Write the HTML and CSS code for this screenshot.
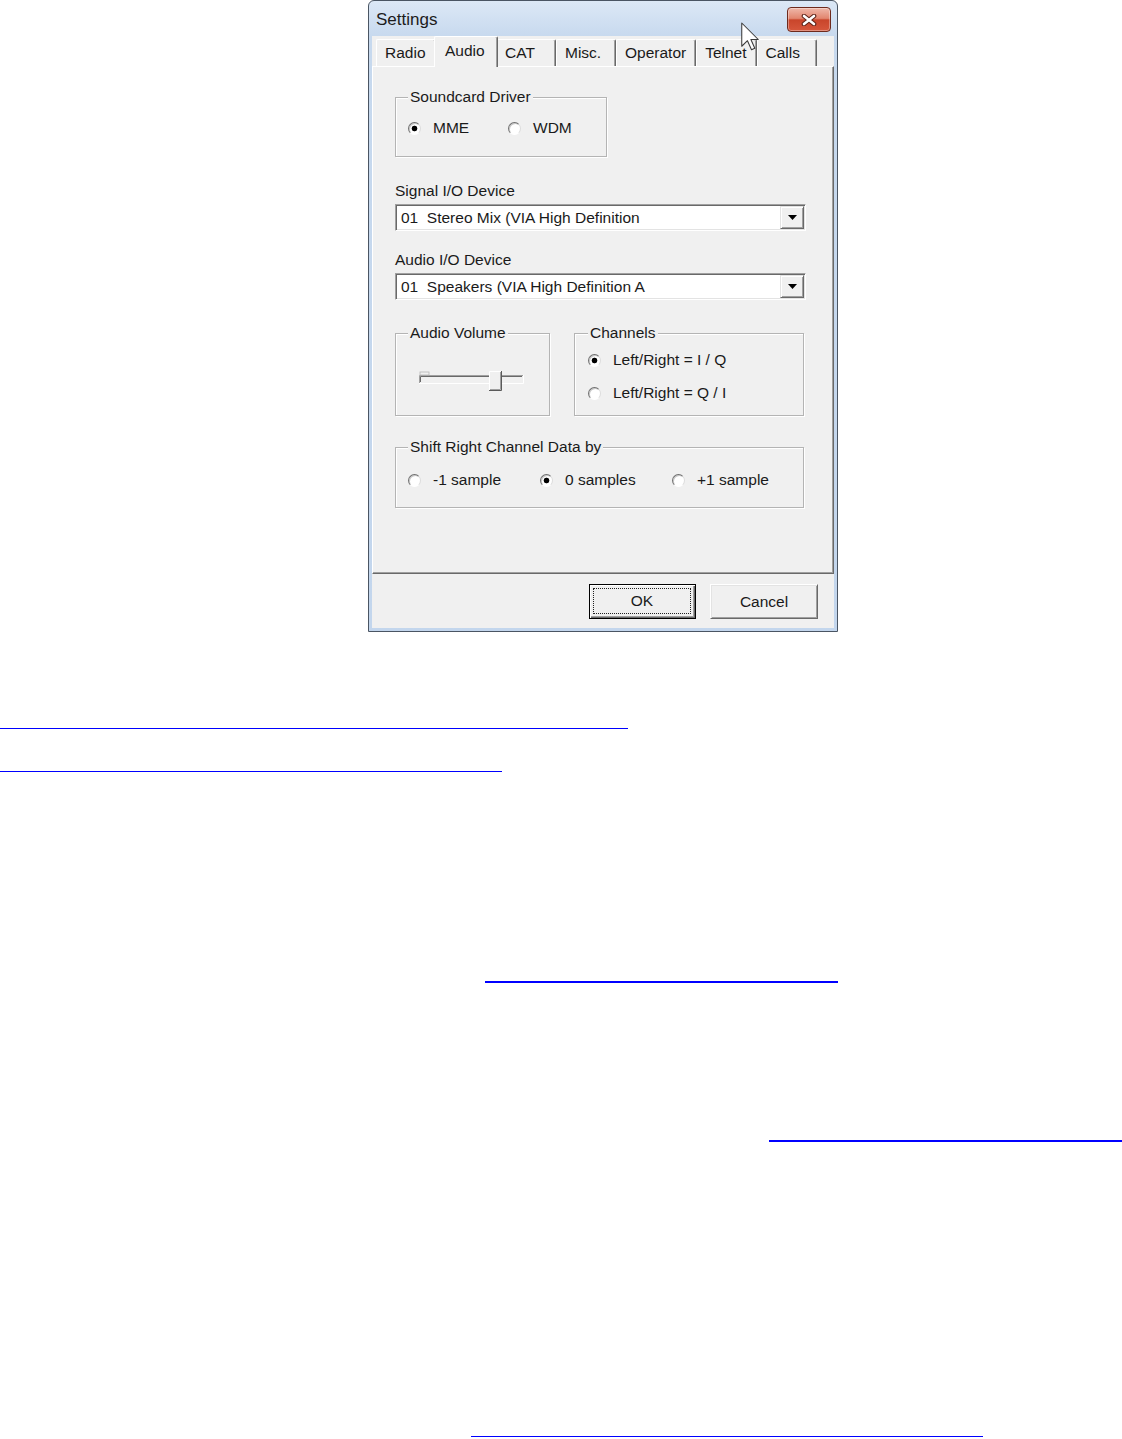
FILE: index.html
```html
<!DOCTYPE html>
<html lang="en">
<head>
    <meta charset="UTF-8">
    <title>Settings</title>
    <link rel="stylesheet" href="styles.css">
</head>
<body>
    <div class="window">
        <div class="titlebar">
            <span class="title">Settings</span>
            <button class="close" aria-label="Close">
                <svg width="16" height="12" viewBox="0 0 16 12">
                    <path d="M3 2 L13 10 M13 2 L3 10" stroke="#5b2116" stroke-width="4.6" stroke-linecap="round"/>
                    <path d="M3 2 L13 10 M13 2 L3 10" stroke="#ffffff" stroke-width="2.6" stroke-linecap="round"/>
                </svg>
            </button>
        </div>

        <div class="client">
            <div class="tabs">
                <span class="tab">Radio</span>
                <span class="tab tab-active">Audio</span>
                <span class="tab">CAT</span>
                <span class="tab">Misc.</span>
                <span class="tab">Operator</span>
                <span class="tab">Telnet</span>
                <span class="tab">Calls</span>
            </div>

            <div class="page">
                <div class="group group-driver">
                    <span class="group-title">Soundcard Driver</span>
                    <div class="radio-row">
                        <label class="radio-item radio-item-driver"><span class="radio checked"></span>MME</label>
                        <label class="radio-item radio-item-driver"><span class="radio"></span>WDM</label>
                    </div>
                </div>

                <div class="field-label">Signal I/O Device</div>
                <div class="combo">
                    <span class="combo-text">01  Stereo Mix (VIA High Definition</span>
                    <span class="combo-btn">
                        <svg width="9" height="5" viewBox="0 0 9 5"><polygon points="0,0 9,0 4.5,5" fill="#000"/></svg>
                    </span>
                </div>

                <div class="field-label field-label-2">Audio I/O Device</div>
                <div class="combo">
                    <span class="combo-text">01  Speakers (VIA High Definition A</span>
                    <span class="combo-btn">
                        <svg width="9" height="5" viewBox="0 0 9 5"><polygon points="0,0 9,0 4.5,5" fill="#000"/></svg>
                    </span>
                </div>

                <div class="group-row">
                    <div class="group group-volume">
                        <span class="group-title">Audio Volume</span>
                        <svg class="slider" width="110" height="24" viewBox="0 0 110 24">
                            <!-- track -->
                            <path d="M1.5 14 V6.5 H105" stroke="#a0a0a0" fill="none"/>
                            <path d="M2.5 13 V7.5 H104" stroke="#696969" fill="none"/>
                            <path d="M1 14.5 H105.5 V6" stroke="#ffffff" fill="none"/>
                            <rect x="2" y="3" width="9" height="3" fill="none" stroke="#b4b4b4" stroke-width="0.8"/>
                            <!-- thumb -->
                            <rect x="71" y="2" width="13" height="20" fill="#f0f0f0"/>
                            <path d="M71.5 22 V2.5 H84" stroke="#ffffff" fill="none"/>
                            <path d="M71 21.5 H83.5 V2" stroke="#5a5a5a" fill="none"/>
                            <path d="M72 20.5 H82.5 V3" stroke="#a0a0a0" fill="none"/>
                        </svg>
                    </div>
                    <div class="group group-channels">
                        <span class="group-title">Channels</span>
                        <label class="radio-item radio-item-first"><span class="radio checked"></span>Left/Right = I / Q</label>
                        <label class="radio-item radio-item-second"><span class="radio"></span>Left/Right = Q / I</label>
                    </div>
                </div>

                <div class="group group-shift">
                    <span class="group-title">Shift Right Channel Data by</span>
                    <div class="radio-row">
                        <label class="radio-item radio-item-shift"><span class="radio"></span>-1 sample</label>
                        <label class="radio-item radio-item-shift"><span class="radio checked"></span>0 samples</label>
                        <label class="radio-item radio-item-shift"><span class="radio"></span>+1 sample</label>
                    </div>
                </div>
            </div>

            <div class="buttons">
                <button class="btn btn-default"><span class="focus">OK</span></button>
                <button class="btn">Cancel</button>
            </div>
        </div>

        <svg class="cursor" width="18" height="29" viewBox="0 0 12 19">
            <polygon points="0.5,0.5 0.5,16 4.3,12.3 7,18.3 9.2,17.3 6.6,11.5 11.5,11.5" fill="#ffffff" stroke="#3a3a3a" stroke-width="0.7" stroke-linejoin="round"/>
        </svg>
    </div>

    <div class="links">
        <a class="link link-1" href="#" aria-label="link"></a>
        <a class="link link-2" href="#" aria-label="link"></a>
        <a class="link link-3" href="#" aria-label="link"></a>
        <a class="link link-4" href="#" aria-label="link"></a>
        <a class="link link-5" href="#" aria-label="link"></a>
    </div>
</body>
</html>
```

FILE: styles.css
```css
:root {
    --face: #f0f0f0;
    --shadow: #a0a0a0;
    --dark-shadow: #696969;
    --highlight: #ffffff;
    --text: #1a1a1a;
    --frame: #c3d6ed;
    --link: #0000ff;
}

* {
    box-sizing: border-box;
}

body {
    margin: 0;
    background: #ffffff;
    font-family: 'Liberation Sans', Arial, sans-serif;
    font-size: 15.5px;
    color: var(--text);
}

/* Ventana */
.window {
    position: relative;
    width: 470px;
    height: 632px;
    margin-left: 368px;
    border: 1px solid #4a5563;
    border-radius: 6px 6px 0 0;
    background: linear-gradient(180deg, #dce8f6 0px, #c7d9ee 36px, var(--frame) 100%);
    padding: 0 3px 3px 3px;
    display: flex;
    flex-direction: column;
}

.titlebar {
    height: 35px;
    display: flex;
    align-items: center;
    justify-content: space-between;
    padding: 2px 3px 0 4px;
}

.title {
    font-size: 17px;
    line-height: 20px;
    color: #1c1c1c;
}

.close {
    width: 44px;
    height: 25px;
    border: 1px solid #6e2a1d;
    border-radius: 4px;
    background: linear-gradient(180deg, #efb8aa 0%, #e2866f 45%, #c9452b 52%, #d6573c 100%);
    box-shadow: inset 0 0 0 1px rgba(255, 255, 255, 0.35);
    display: flex;
    align-items: center;
    justify-content: center;
    padding: 0;
}

.client {
    flex: 1;
    background: var(--face);
    display: flex;
    flex-direction: column;
}

/* Pestañas */
.tabs {
    height: 30px;
    display: flex;
    align-items: flex-end;
    padding-left: 4px;
}

.tab {
    height: 27px;
    min-width: 60px;
    padding: 4px 9px 0 8px;
    line-height: 18px;
    background: var(--face);
    border-top: 1px solid var(--highlight);
    border-left: 1px solid var(--highlight);
    border-right: 1px solid var(--dark-shadow);
    border-radius: 2px 2px 0 0;
    box-shadow: inset -1px 0 0 var(--shadow);
    white-space: nowrap;
}

.tab-active {
    position: relative;
    z-index: 1;
    height: 31px;
    margin: 0 -2px -1px -2px;
    padding: 5px 11px 0 10px;
    min-width: 64px;
}

.page {
    height: 508px;
    border-top: 1px solid var(--highlight);
    border-left: 1px solid var(--highlight);
    border-right: 1px solid var(--dark-shadow);
    border-bottom: 1px solid var(--dark-shadow);
    box-shadow: inset -1px -1px 0 var(--shadow);
    padding: 30px 0 0 22px;
    display: flex;
    flex-direction: column;
    align-items: flex-start;
}

/* Marcos de grupo */
.group {
    border: 1px solid #b4b4b4;
    box-shadow: inset 1px 1px 0 var(--highlight), 1px 1px 0 var(--highlight);
    padding: 0 0 0 12px;
    display: flex;
    flex-direction: column;
    align-items: flex-start;
}

.group-title {
    margin-top: -10px;
    padding: 0 2px;
    line-height: 18px;
    background: var(--face);
    white-space: nowrap;
}

.group-driver {
    width: 212px;
    height: 60px;
}

.group-driver .radio-row {
    margin-top: 13px;
}

.group-row {
    margin-top: 33px;
    display: flex;
    gap: 24px;
}

.group-volume {
    width: 155px;
    height: 83px;
}

.slider {
    margin: 27px 0 0 10px;
}

.group-channels {
    width: 230px;
    height: 83px;
    padding-left: 13px;
}

.group-shift {
    margin-top: 31px;
    width: 409px;
    height: 61px;
}

.group-shift .radio-row {
    margin-top: 15px;
}

.radio-row {
    display: flex;
}

.radio-item {
    display: flex;
    align-items: center;
    line-height: 18px;
    white-space: nowrap;
}

.radio-item-driver {
    width: 100px;
}

.radio-item-shift {
    width: 132px;
}

.radio-item-first {
    margin-top: 9px;
}

.radio-item-second {
    margin-top: 15px;
}

.radio {
    width: 13px;
    height: 13px;
    margin-right: 12px;
    border-radius: 50%;
    border: 1px solid;
    border-color: #6f6f6f #dcdcdc #ffffff #6f6f6f;
    background: #ffffff;
    box-shadow: inset 1px 1px 0 #c8c8c8;
    flex-shrink: 0;
}

.radio.checked {
    background: radial-gradient(circle, #000000 0 2.5px, #ffffff 3.2px);
}

/* Listas desplegables */
.field-label {
    margin-top: 25px;
    line-height: 18px;
}

.field-label-2 {
    margin-top: 20px;
}

.combo {
    margin-top: 4px;
    width: 411px;
    height: 27px;
    padding: 1px;
    background: #ffffff;
    border: 1px solid;
    border-color: var(--shadow) var(--highlight) var(--highlight) var(--shadow);
    box-shadow: inset 1px 1px 0 var(--dark-shadow), inset -1px -1px 0 #e3e3e3;
    display: flex;
    align-items: center;
}

.combo-text {
    flex: 1;
    padding: 1px 0 0 4px;
    white-space: pre;
    line-height: 18px;
}

.combo-btn {
    width: 24px;
    height: 23px;
    background: var(--face);
    border: 1px solid;
    border-color: #e3e3e3 var(--dark-shadow) var(--dark-shadow) #e3e3e3;
    box-shadow: inset 1px 1px 0 var(--highlight), inset -1px -1px 0 var(--shadow);
    display: flex;
    align-items: center;
    justify-content: center;
}

/* Botones */
.buttons {
    flex: 1;
    display: flex;
    justify-content: flex-end;
    align-items: flex-start;
    gap: 14px;
    padding: 10px 16px 0 0;
}

.btn {
    width: 108px;
    height: 35px;
    padding: 0;
    font: inherit;
    color: var(--text);
    background: var(--face);
    border: 1px solid;
    border-color: var(--highlight) var(--dark-shadow) var(--dark-shadow) var(--highlight);
    box-shadow: inset 1px 1px 0 #e3e3e3, inset -1px -1px 0 var(--shadow);
    display: flex;
    align-items: center;
    justify-content: center;
}

.btn-default {
    width: 107px;
    border: 1px solid #000000;
    box-shadow: inset 1px 1px 0 var(--highlight), inset -1px -1px 0 var(--dark-shadow), inset -2px -2px 0 var(--shadow);
    padding: 3px 4px 4px 3px;
}

.focus {
    flex: 1;
    align-self: stretch;
    border: 1px dotted #222222;
    display: flex;
    align-items: center;
    justify-content: center;
}

.cursor {
    position: absolute;
    left: 372px;
    top: 21px;
}

/* Enlaces */
.links {
    display: flex;
    flex-direction: column;
    align-items: flex-start;
}

.link {
    display: block;
    height: 0;
    border-bottom: 1px solid var(--link);
}

.link-1 {
    margin-top: 96px;
    width: 628px;
}

.link-2 {
    margin-top: 42px;
    width: 502px;
}

.link-3 {
    margin-top: 209px;
    margin-left: 485px;
    width: 353px;
    border-bottom-width: 2px;
}

.link-4 {
    margin-top: 157px;
    margin-left: 769px;
    width: 353px;
    border-bottom-width: 2px;
}

.link-5 {
    margin-top: 294px;
    margin-left: 471px;
    width: 512px;
}
```
